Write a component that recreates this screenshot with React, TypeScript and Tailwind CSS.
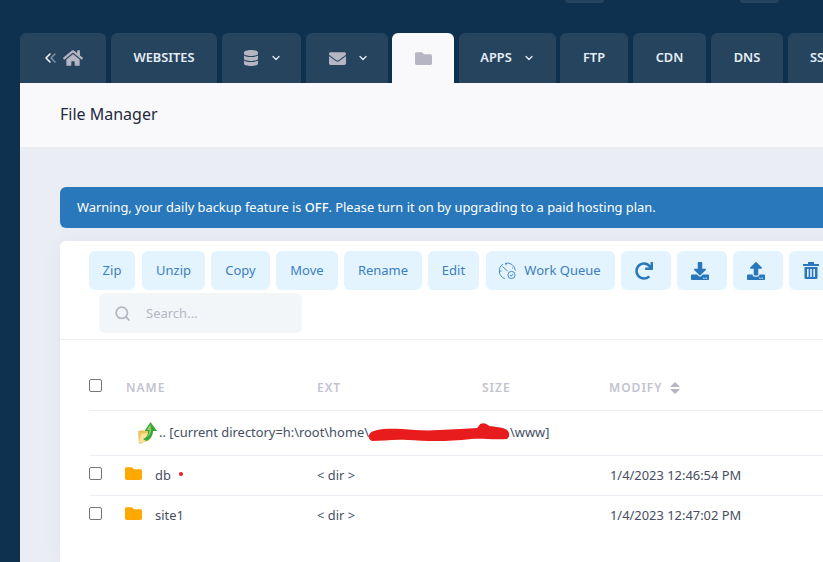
import { ChevronDown, ChevronLeft, Search } from "lucide-react";
import { FaDatabase, FaDownload, FaEnvelope, FaFolder, FaHome, FaRedo, FaUpload } from "react-icons/fa";

const tabClass =
  "h-[50px] shrink-0 rounded-t-md bg-[#27445f] flex items-center justify-center text-[12.8px] font-semibold text-[#e4eef7]";
const toolBtn =
  "h-[39px] shrink-0 rounded-md bg-[#e3f4fe] flex items-center justify-center text-[13px] text-[#3b80c0]";

function Checkbox() {
  return <div className="w-[13px] h-[13px] rounded-[2px] border border-[#767676] bg-white shrink-0 -mt-[5px]" />;
}

function TrashIcon() {
  return (
    <svg width="16" height="17" viewBox="0 0 16 17" fill="#2a78bc">
      <rect x="0" y="2" width="16" height="2" />
      <rect x="5" y="0" width="6" height="2" />
      <path d="M1.5 5h13v10.5a1.5 1.5 0 0 1-1.5 1.5H3a1.5 1.5 0 0 1-1.5-1.5z" />
      <rect x="4" y="7" width="1.6" height="8" fill="#e3f4fe" />
      <rect x="7.2" y="7" width="1.6" height="8" fill="#e3f4fe" />
      <rect x="10.4" y="7" width="1.6" height="8" fill="#e3f4fe" />
    </svg>
  );
}

function QueueIcon() {
  return (
    <svg width="19" height="18" viewBox="0 0 19 18" fill="none" stroke="#3b80c0" strokeWidth="0.9">
      <path d="M5 2.2A8 8 0 0 0 7 16.6" />
      <path d="M7 1.4A8 8 0 0 1 17.3 8.5" />
      <path d="M8 1v2.2M2 9h1.6M15 5.5l-1 .8" />
      <path d="M4.5 4.5l5 4.5" />
      <circle cx="13.5" cy="13" r="3.6" />
      <path d="M11.8 13l1.3 1.3 2.2-2.4" />
    </svg>
  );
}

function FolderUpIcon() {
  return (
    <svg width="19" height="22" viewBox="0 0 19 22">
      <path d="M0 9l5-1 1 1 6-1v10L1 22z" fill="#e9c35f" />
      <path d="M1 21l2-9 11-2-2 8z" fill="#fbe39a" />
      <path d="M5 17c3-1 5-3 5-8H6.500L12.500 0 19 9h-4c0 5-3 9-7 10z" fill="#3aa53a" />
      <path d="M12.500 2L9 8h2.500c0 3-1 5-3 7 3-1 4.500-4 4.500-7z" fill="#8fd35a" />
    </svg>
  );
}

function SortIcon() {
  return (
    <svg width="10" height="12" viewBox="0 0 10 12" fill="#b5b5c3">
      <path d="M5 0l5 5H0zM5 12L0 7h10z" />
    </svg>
  );
}

function Scribble() {
  return (
    <svg width="143" height="20" viewBox="0 0 144 20" className="shrink-0 mx-[-1px]">
      <path
        d="M1 12C3 6 18 5 34 6c14 1 24 2 38 1 14-1 28-1 38-2l3-4c4-2 7 0 9 2 6 1 14 1 18 4 3 3 3 7 0 9-14 1-26-1-36 0-26 3-46 2-64 1-14-1-26 1-36 1-3-1-4-4-3-6z"
        fill="#e81c1c"
      />
    </svg>
  );
}

export default function App() {
  return (
    <div
      className="h-[562px] w-[823px] overflow-hidden bg-[#0e3150] flex flex-col"
      style={{ fontFamily: '"Noto Sans", "Open Sans", sans-serif' }}
    >
      {/* Top bar leftovers */}
      <div className="h-[33px] shrink-0 flex pl-[565px] gap-[136px]">
        <div className="w-[39px] h-[3px] rounded-b-md bg-[#27445f]" />
        <div className="w-[39px] h-[3px] rounded-b-md bg-[#27445f]" />
      </div>

      {/* Tabs */}
      <div className="flex pl-[20px] h-[50px] shrink-0">
        <div className={`${tabClass} w-[86px] gap-[6px] pr-[1px]`}>
          <span className="relative w-[15px] h-[16px]">
            <ChevronLeft size={16} strokeWidth={2} className="absolute left-[3px] top-0 text-[#8596a8]" />
            <ChevronLeft size={16} strokeWidth={2.2} className="absolute left-[-2px] top-0 text-white" />
          </span>
          <FaHome size={20} className="text-[#b5b5c3]" />
        </div>
        <div className={`${tabClass} w-[106px] ml-[5px]`}>WEBSITES</div>
        <div className={`${tabClass} w-[79px] ml-[5px] gap-[11px] pl-[2px]`}>
          <FaDatabase size={16} className="text-[#b5b5c3]" />
          <ChevronDown size={12} strokeWidth={2.5} />
        </div>
        <div className={`${tabClass} w-[82px] ml-[5px] gap-[11px] pl-[4px]`}>
          <FaEnvelope size={17} className="text-[#b5b5c3]" />
          <ChevronDown size={12} strokeWidth={2.5} />
        </div>
        <div className={`${tabClass} w-[62px] ml-[4px] !bg-[#f9f9fc]`}>
          <FaFolder size={17} className="text-[#b5b5c3]" />
        </div>
        <div className={`${tabClass} w-[97px] ml-[5px] gap-[11px]`}>
          APPS
          <ChevronDown size={12} strokeWidth={2.5} />
        </div>
        <div className={`${tabClass} w-[68px] ml-[4px]`}>FTP</div>
        <div className={`${tabClass} w-[73px] ml-[5px]`}>CDN</div>
        <div className={`${tabClass} w-[72px] ml-[5px]`}>DNS</div>
        <div className={`${tabClass} w-[72px] ml-[5px] !justify-start pl-[22px]`}>SSL</div>
      </div>

      {/* Content */}
      <div className="ml-[20px] flex-1 flex flex-col bg-[#ebedf5] min-h-0">
        <div className="h-[64px] shrink-0 bg-[#f9f9fc] flex items-center pl-[40px] pb-[2px] text-[16px] text-[#1f2a3c]">
          File Manager
        </div>

        <div className="pl-[40px] pt-[40px] flex-1 flex flex-col min-h-0">
          <div className="h-[41px] shrink-0 w-[800px] rounded-l-md bg-[#2a78bc] flex items-center pl-[17px] text-[12.85px] text-white">
            <span>
              Warning, your daily backup feature is <span className="font-medium">OFF</span>. Please turn it on by
              upgrading to a paid hosting plan.
            </span>
          </div>

          <div className="mt-[13px] w-[800px] flex-1 rounded-tl-md bg-white shadow-[0_0_20px_rgba(82,63,105,0.05)]">
            {/* Toolbar */}
            <div className="h-[99px] border-b border-[#ebedf3] pl-[29px] pt-[10px]">
              <div className="flex gap-[6px]">
                <button className={`${toolBtn} w-[46px]`}>Zip</button>
                <button className={`${toolBtn} w-[63px] ml-[1px]`}>Unzip</button>
                <button className={`${toolBtn} w-[59px]`}>Copy</button>
                <button className={`${toolBtn} w-[62px]`}>Move</button>
                <button className={`${toolBtn} w-[78px]`}>Rename</button>
                <button className={`${toolBtn} w-[51px]`}>Edit</button>
                <button className={`${toolBtn} w-[129px] ml-[1px] gap-[7px] pr-[2px]`}>
                  <QueueIcon />
                  Work Queue
                </button>
                <button className={`${toolBtn} w-[50px] pr-[5px]`}>
                  <FaRedo size={18} className="text-[#2a78bc]" />
                </button>
                <button className={`${toolBtn} w-[50px] pr-[4px]`}>
                  <FaDownload size={18} className="text-[#2a78bc]" />
                </button>
                <button className={`${toolBtn} w-[50px] pr-[4px]`}>
                  <FaUpload size={18} className="text-[#2a78bc]" />
                </button>
                <button className={`${toolBtn} w-[50px] pr-[7px]`}>
                  <TrashIcon />
                </button>
              </div>
              <div className="ml-[10px] mt-[3px] w-[203px] h-[40px] rounded-md bg-[#f3f6f9] flex items-center pl-[16px] gap-[15px] text-[13px] text-[#b5b5c3]">
                <Search size={17} strokeWidth={2.5} className="text-[#b5b5c3] -ml-[1px]" />
                <span className="pt-[1px]">Search...</span>
              </div>
            </div>

            {/* Table */}
            <div className="pl-[29px] text-[12.9px] text-[#464e5f]">
              <div className="h-[71px] border-b border-[#ebedf3] grid grid-cols-[36px_192px_164px_129px_1fr] items-center pt-[25px] text-[12px] font-semibold tracking-[1px] text-[#c3c3cf]">
                <div>
                  <Checkbox />
                </div>
                <div className="pl-[1px]">NAME</div>
                <div>EXT</div>
                <div className="pl-[1px]">SIZE</div>
                <div className="flex items-center gap-[7px] -ml-[1px]">
                  MODIFY
                  <SortIcon />
                </div>
              </div>

              <div className="h-[45px] border-b border-[#ebedf3] flex items-center pl-[49px]">
                <FolderUpIcon />
                <span className="ml-[2px]">.. [current directory=h:\root\home\</span>
                <Scribble />
                <span>\www]</span>
              </div>

              <div className="h-[40px] border-b border-[#ebedf3] grid grid-cols-[36px_192px_164px_129px_1fr] items-center">
                <Checkbox />
                <div className="flex items-center">
                  <FaFolder size={17} className="text-[#ffa800] w-[17px] -mt-[4px]" />
                  <span className="ml-[13px]">db</span>
                  <span className="ml-[8px] -mt-[2px] w-[4px] h-[4px] rounded-full bg-[#e81c1c]" />
                </div>
                <div>&lt; dir &gt;</div>
                <div />
                <div>1/4/2023 12:46:54 PM</div>
              </div>

              <div className="h-[40px] grid grid-cols-[36px_192px_164px_129px_1fr] items-center">
                <Checkbox />
                <div className="flex items-center">
                  <FaFolder size={17} className="text-[#ffa800] w-[17px] -mt-[4px]" />
                  <span className="ml-[13px]">site1</span>
                </div>
                <div>&lt; dir &gt;</div>
                <div />
                <div>1/4/2023 12:47:02 PM</div>
              </div>
            </div>
          </div>
        </div>
      </div>
    </div>
  );
}
